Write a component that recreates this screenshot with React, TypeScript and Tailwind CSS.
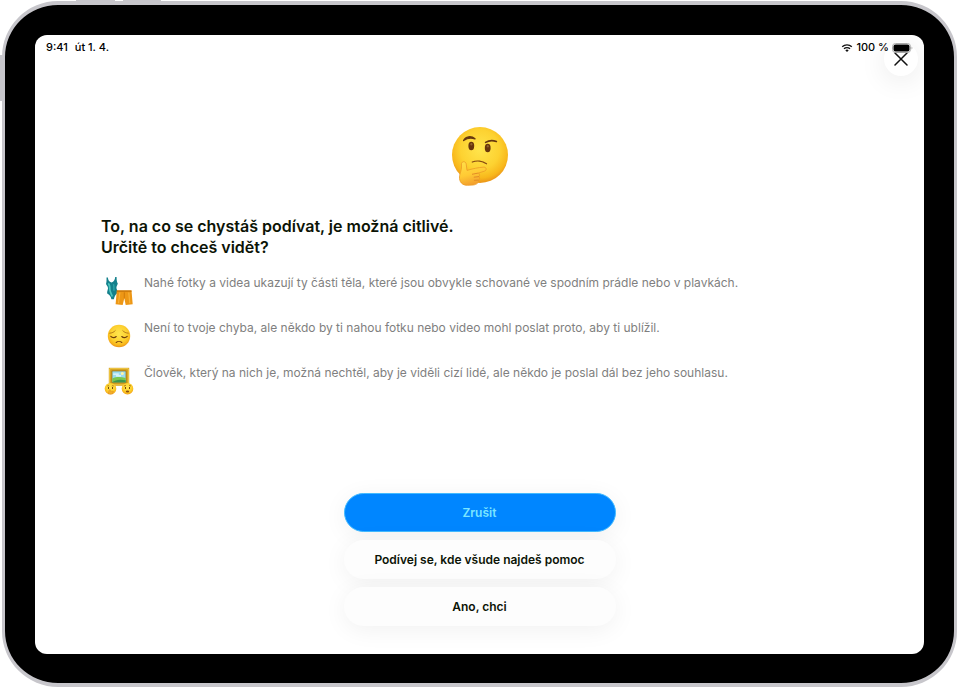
import type { ReactNode } from "react";

function ThinkingFace() {
  return (
    <svg viewBox="0 0 80 80" className="h-20 w-20" role="img" aria-label="Přemýšlející obličej">
      <defs>
        <radialGradient id="face" cx="0.5" cy="0.4" r="0.58">
          <stop offset="0" stopColor="#ffe54d" />
          <stop offset="0.6" stopColor="#fdd231" />
          <stop offset="0.88" stopColor="#f8b71b" />
          <stop offset="1" stopColor="#ed9a1a" />
        </radialGradient>
        <linearGradient id="hand" x1="0" y1="0" x2="0.3" y2="1">
          <stop offset="0" stopColor="#ffe04a" />
          <stop offset="0.6" stopColor="#ffca34" />
          <stop offset="1" stopColor="#f3a02d" />
        </linearGradient>
      </defs>
      <circle cx="40" cy="40" r="28" fill="url(#face)" />
      <path d="M23.600 25.500c2-4.300 7.600-5 11.400-1.700-3.800-1.300-8-.8-11.400 1.700z" fill="#67380f" stroke="#67380f" strokeWidth="1.300" strokeLinejoin="round" />
      <path d="M45.600 27.400c3.200-2 7-2.300 10.800-.9" fill="none" stroke="#67380f" strokeWidth="1.600" strokeLinecap="round" />
      <ellipse cx="31.300" cy="31" rx="2.900" ry="4.200" fill="#68350c" />
      <ellipse cx="47.700" cy="33" rx="2.900" ry="4.200" fill="#68350c" />
      <ellipse cx="31.400" cy="29.300" rx="1" ry="1.200" fill="#91622e" />
      <ellipse cx="47.800" cy="31.300" rx="1" ry="1.200" fill="#91622e" />
      <path d="M32.300 47c4.200-1.600 10.200-1 14.200 1.700" fill="none" stroke="#8a4d12" strokeWidth="1.300" strokeLinecap="round" />
      <path
        d="M21.400 48.800c.5-2.800 4.400-2.800 4.800.2l.8 6.400c5-1.500 11.600-3 16.800-3.300 2.900-.1 3.200 3.400.5 4.100l-5.800 1.800c1.200 1 1.300 2.600.5 3.600 1 1.200.8 2.800-.4 3.500.5 2.600-1.900 4.500-5.500 4.900l-5.400.3c-5.600.2-8.500-3.500-8.200-8.400.2-4 2.600-6.500 1.900-13.100z"
        fill="url(#hand)"
        stroke="#ec9a24"
        strokeWidth=".8"
      />
      <path d="M38.500 58l-6.500 1.300M39 61.600l-5.200.6M38.600 65.100l-4.700.2" fill="none" stroke="#df8425" strokeWidth=".9" />
    </svg>
  );
}

function SwimwearIcon() {
  return (
    <svg viewBox="0 0 30 30" className="h-[30px] w-[30px]" aria-hidden="true">
      <path
        d="M2.500 1.500h1.400c.2 2.600 1.200 4.500 3.600 5 2.400-.8 3.400-2.600 3.700-5.500h1.400c-.1 3.200.4 5.300 1.200 6.500-.6 2-1.700 3.300-1.300 5 .6 1.700 1.300 3 1.200 4.600-2 1.300-3.300 3.400-3.800 6.100H7.400c-.5-2.600-2-4.600-4.200-5.700-.3-1.900.5-3.200.8-5 .2-1.700-1.100-3-2-4.600.6-1.700.6-3.700.5-6.400z"
        fill="#14808c"
      />
      <path d="M4.200 7.300c1.800 1.600 1.700 3.800 1.600 6 0 2.500 1.600 4.400 2.500 7.300" fill="none" stroke="#4cc4bd" strokeWidth="1.700" />
      <path d="M9.400 8.200c1.200 2.400-.2 4.200.8 6.500" fill="none" stroke="#2ca5a8" strokeWidth="1.400" />
      <path d="M12.800 14.400h14.700l1.200 13.900-7 .7-1.400-6.700-1.600 6.700-7.100-.7z" fill="#ed9716" />
      <path d="M12.800 15.100h14.700" stroke="#c67409" strokeWidth="1.400" />
      <path d="M15.800 16.500l-1.300 10.800M24.800 16.500l1 10.800" stroke="#f8b239" strokeWidth="1.200" />
      <path d="M20.300 16.300v6" stroke="#c87508" strokeWidth=".8" />
    </svg>
  );
}

function PensiveIcon() {
  return (
    <svg viewBox="0 0 30 30" className="h-[30px] w-[30px]" aria-hidden="true">
      <circle cx="15" cy="15" r="11.200" fill="url(#face)" />
      <path d="M5.700 12.200c2.400-.2 4.200-1 5.500-2.500M18.800 9.700c1.300 1.500 3.100 2.300 5.500 2.500" fill="none" stroke="#a56813" strokeWidth=".8" strokeLinecap="round" />
      <path d="M6.800 15.300c1.500 1.700 4 1.700 5.400.2M17.800 15.500c1.400 1.500 3.900 1.500 5.400-.2" fill="none" stroke="#6e3d0c" strokeWidth="1.100" strokeLinecap="round" />
      <path d="M12.200 21.500c1.500-1.400 4.100-1.400 5.600 0" fill="none" stroke="#7b430e" strokeWidth="1.100" strokeLinecap="round" />
    </svg>
  );
}

function PictureIcon() {
  return (
    <svg viewBox="0 0 30 30" className="h-[30px] w-[30px]" aria-hidden="true">
      <path d="M4.800 1.800h20.400v18H4.800z" fill="#cf9a1c" />
      <path d="M5.700 2.700h18.600v16.200H5.700z" fill="none" stroke="#f3cd4b" strokeWidth="1" />
      <path d="M8 5h14v11.500H8z" fill="#9adcf0" stroke="#8f701b" strokeWidth=".7" />
      <circle cx="18.300" cy="7.600" r="1.500" fill="#fff5a6" />
      <path d="M9.200 8.100h5.600M12 9.800h5" stroke="#eaf8fb" strokeWidth="1.300" />
      <path d="M8.300 12.500c4-2 8.400-1.900 13.400-.5v4.200H8.300z" fill="#7bc74e" />
      <path d="M8.300 16.200c3-2.400 7-3.200 13.400-2v2z" fill="#3c9650" />
      <circle cx="6.500" cy="22.700" r="5.800" fill="url(#face)" />
      <circle cx="23.500" cy="22.700" r="5.800" fill="url(#face)" />
      <path d="M3.300 20.100c.6-.5 1.300-.5 1.900 0M7.800 20.100c.6-.5 1.300-.5 1.900 0M20 20.100l1.900-.8M25.100 19.300l1.900.8" fill="none" stroke="#84500f" strokeWidth=".7" />
      <path d="M4.500 21.500v1M8.500 21.500v1M21.500 21.500v1M25.500 21.500v1" stroke="#663608" strokeWidth="1" strokeLinecap="round" />
      <path d="M4.300 28l.7-3.700c.3-1.200 1.500-1.100 1.500.1v.8l2.300-.1c.9.100.8 1.100.1 1.300l-.3 1.600z" fill="#f3ae2b" stroke="#d98818" strokeWidth=".4" />
      <ellipse cx="23.500" cy="25.500" rx="1.700" ry="1.100" fill="#8a4d12" />
    </svg>
  );
}

function WifiIcon() {
  return (
    <svg viewBox="0 0 12 10" className="h-[10px] w-[12px]" aria-hidden="true">
      <path d="M1.200 3.800a7 7 0 0 1 9.600 0M3 5.800a4.400 4.400 0 0 1 6 0" fill="none" stroke="#111" strokeWidth="1.400" />
      <path d="M4.300 7.200a2.500 2.500 0 0 1 3.400 0L6 9z" fill="#111" />
    </svg>
  );
}

function BatteryIcon() {
  return (
    <svg viewBox="0 0 21 10" className="h-[10px] w-[21px]" aria-hidden="true">
      <rect x=".5" y=".5" width="18" height="9" rx="3" fill="none" stroke="#aaa" />
      <rect x="1.500" y="1.500" width="16" height="7" rx="2" fill="#000" />
      <path d="M19.500 3.500c1.200.4 1.200 2.600 0 3z" fill="#aaa" />
    </svg>
  );
}

const reasons: { icon: ReactNode; text: string }[] = [
  {
    icon: <SwimwearIcon />,
    text: "Nahé fotky a videa ukazují ty části těla, které jsou obvykle schované ve spodním prádle nebo v plavkách.",
  },
  {
    icon: <PensiveIcon />,
    text: "Není to tvoje chyba, ale někdo by ti nahou fotku nebo video mohl poslat proto, aby ti ublížil.",
  },
  {
    icon: <PictureIcon />,
    text: "Člověk, který na nich je, možná nechtěl, aby je viděli cizí lidé, ale někdo je poslal dál bez jeho souhlasu.",
  },
];

const secondaryActions = ["Podívej se, kde všude najdeš pomoc", "Ano, chci"];

export default function App() {
  return (
    <div className="relative flex min-h-screen flex-col bg-white pt-px pr-[3px] pb-[2px] pl-[2px] font-['Inter','Liberation_Sans',sans-serif]">
      {/* hardware buttons on the edge of the case */}
      <span className="absolute top-0 left-[76px] h-1 w-[39px] bg-[#c7c6cb]" />
      <span className="absolute top-0 left-[123px] h-1 w-[38px] bg-[#c7c6cb]" />
      <span className="absolute top-[55px] left-0 h-[46px] w-1 bg-[#c7c6cb]" />

      <div className="relative flex flex-1 flex-col rounded-[56px] border-x-[3px] border-y-4 border-[#c7c6cb] bg-black px-[30px] pt-[30px] pb-[29px]">
        <div className="relative flex flex-1 flex-col overflow-hidden rounded-[12px] bg-white">
          <header className="flex h-[25px] items-center justify-between pr-[11px] pl-[11px] text-[11px] font-medium text-black">
            <div className="flex gap-[7px]">
              <span>9:41</span>
              <span>út 1. 4.</span>
            </div>
            <div className="relative z-10 flex items-center gap-[3px]">
              <WifiIcon />
              <span>100 %</span>
              <BatteryIcon />
            </div>
          </header>

          <button
            type="button"
            aria-label="Zavřít"
            className="absolute top-[7px] right-[6px] flex h-[34px] w-[34px] items-center justify-center rounded-full bg-white shadow-[0_4px_28px_rgba(0,0,0,0.09)]"
          >
            <svg viewBox="0 0 14 14" className="h-[14px] w-[14px]" aria-hidden="true">
              <path d="M1 1l12 12M13 1L1 13" stroke="#111" strokeWidth="1.500" strokeLinecap="round" />
            </svg>
          </button>

          <main className="flex flex-1 flex-col px-[66px] pt-[55px] pb-7">
            <div className="flex justify-center">
              <ThinkingFace />
            </div>

            <h1 className="mt-[21px] text-[16px] leading-[21px] font-semibold text-[#0c1406]">
              To, na co se chystáš podívat, je možná citlivé.
              <br />
              Určitě to chceš vidět?
            </h1>

            <ul className="mt-4 flex flex-col gap-[15px]">
              {reasons.map((reason) => (
                <li key={reason.text} className="flex gap-[10px] pl-[3px]">
                  <span className="mt-[2px] -mb-[2px] shrink-0">{reason.icon}</span>
                  <p className="text-[12px] leading-[18px] text-[#7f7f80]">{reason.text}</p>
                </li>
              ))}
            </ul>

            <div className="mx-auto mt-auto flex w-full max-w-[272px] flex-col gap-2">
              <button
                type="button"
                className="h-[39px] rounded-full border border-[#42baff] bg-[#0086ff] text-[12px] font-semibold text-[#7be5ff] shadow-[0_4px_24px_rgba(0,0,0,0.06)]"
              >
                Zrušit
              </button>
              {secondaryActions.map((label) => (
                <button
                  key={label}
                  type="button"
                  className="h-[39px] rounded-full bg-[#fdfdfd] text-[12px] font-semibold text-[#0c1406] shadow-[0_4px_24px_rgba(0,0,0,0.06)]"
                >
                  {label}
                </button>
              ))}
            </div>
          </main>
        </div>
      </div>
    </div>
  );
}
